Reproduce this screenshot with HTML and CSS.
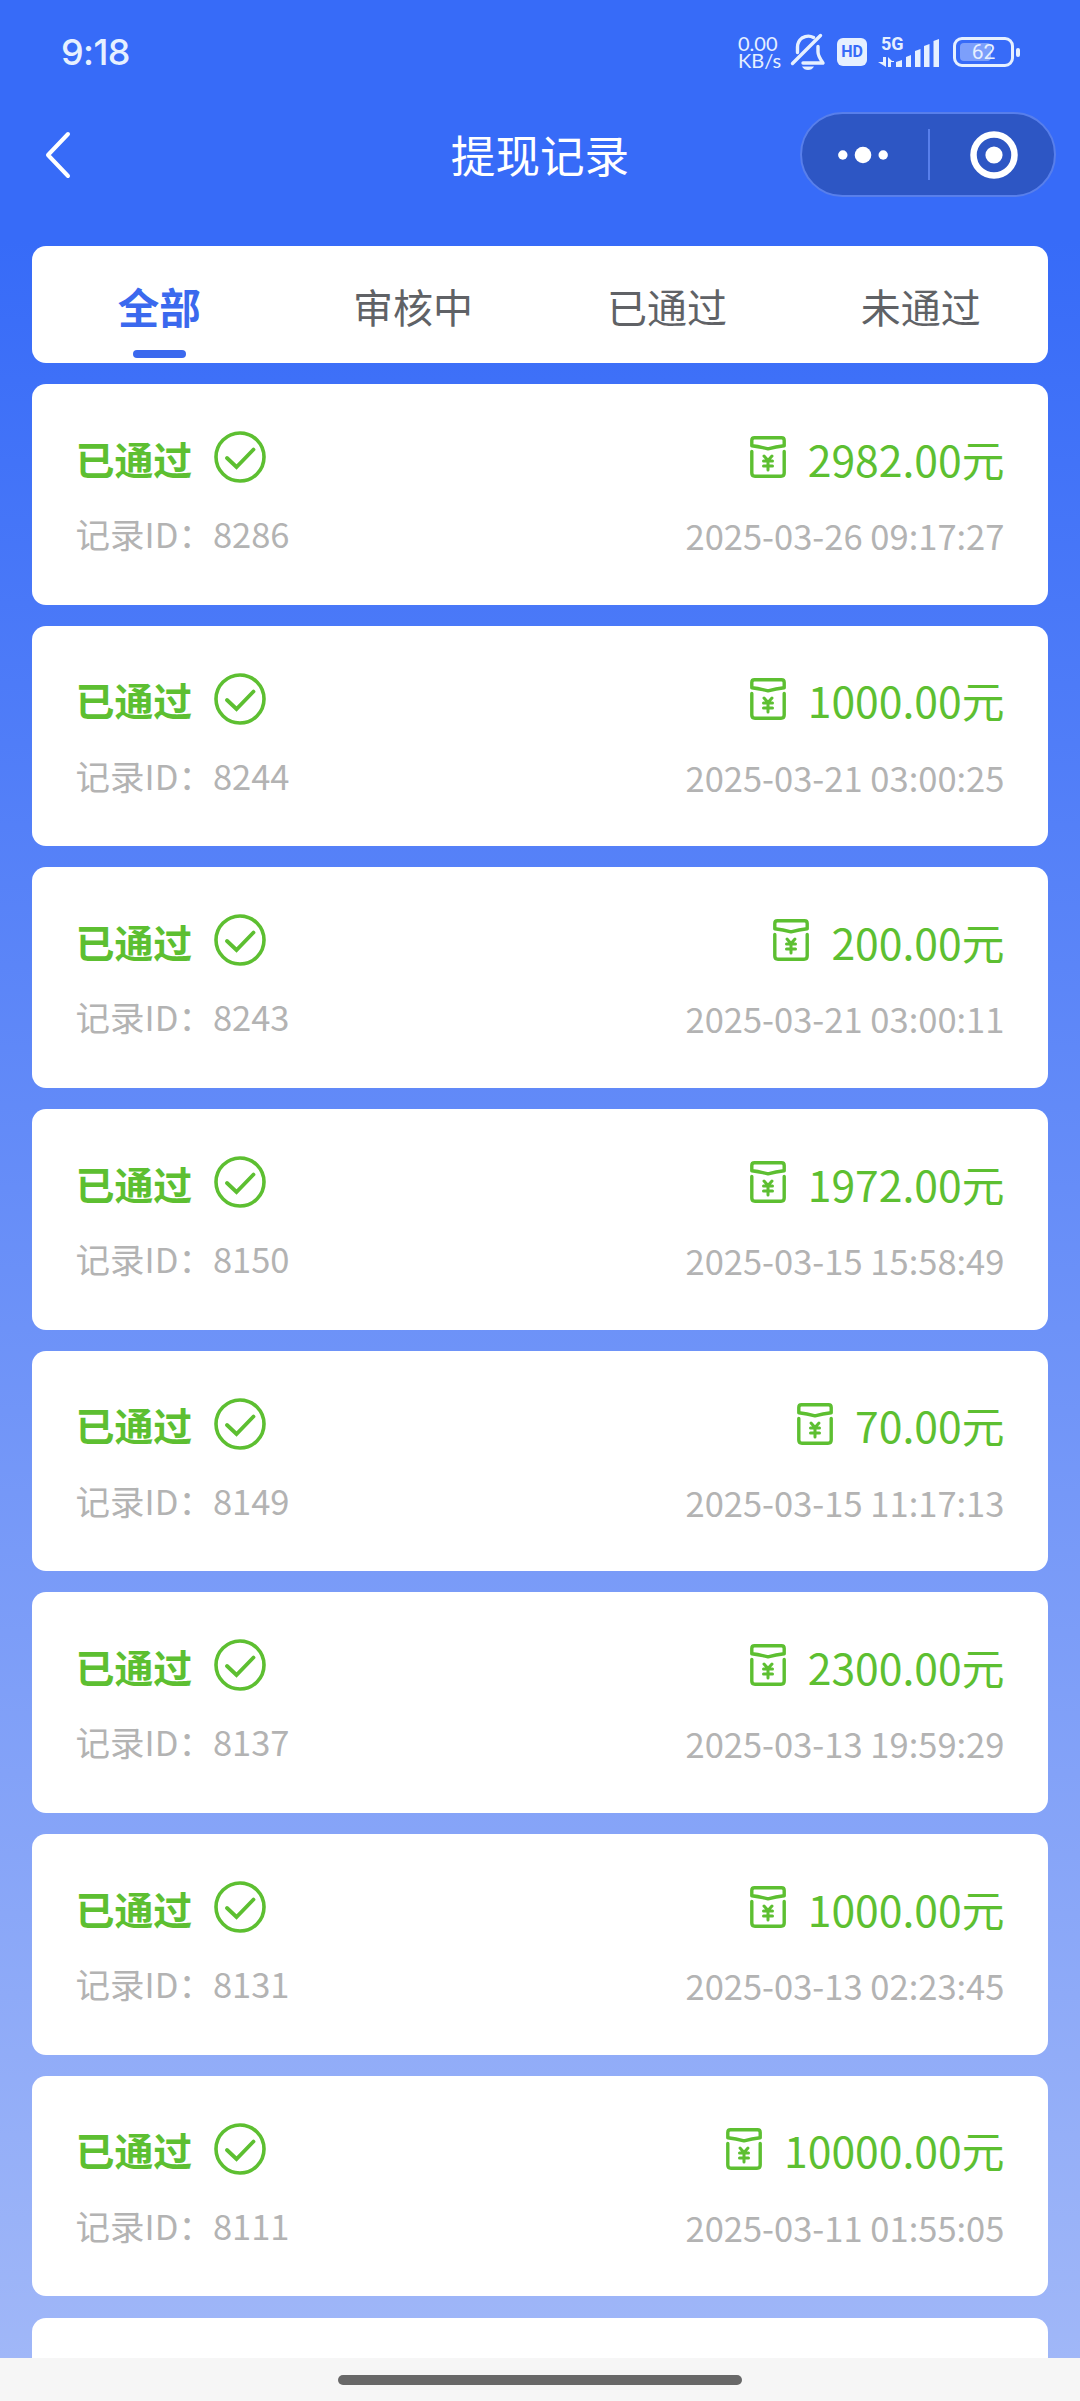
FILE: index.html
```html
<!DOCTYPE html>
<html lang="zh-CN">
<head>
<meta charset="utf-8">
<title>提现记录</title>
<link rel="stylesheet" href="styles.css">
</head>
<body>
<svg class="sprite" aria-hidden="true">
  <symbol id="check" viewBox="0 0 52 52">
    <circle cx="26" cy="26" r="24" fill="none" stroke="currentColor" stroke-width="3.6"/>
    <path d="M13 27 L22.5 36 L39.500 18.500" fill="none" stroke="currentColor" stroke-width="3.8" stroke-linecap="round" stroke-linejoin="miter"/>
  </symbol>
  <symbol id="packet" viewBox="0 0 36 42">
    <g fill="none" stroke="currentColor" stroke-width="3.400" stroke-linecap="round" stroke-linejoin="round">
      <path d="M4.500 1.800H31.500Q34.200 1.800 34.200 4.500V9.800Q26 10.800 18 12.800Q10 10.800 1.800 9.800V4.500Q1.800 1.800 4.500 1.800Z"/>
      <path d="M1.800 15.500V37Q1.800 40.200 5 40.200H31Q34.200 40.200 34.200 37V15.500"/>
      <path d="M14 20L18 24.500L22 20M13.500 25H22.500M13.500 30H22.500M18 25V34" stroke-width="3"/>
    </g>
  </symbol>
</svg>
<div class="screen">
  <div class="status">
    <span class="clock">9:18</span>
    <div class="speed"><span>0.00</span><span>KB/s</span></div>
    <svg class="bell" width="36" height="38" viewBox="0 0 36 38" fill="none" stroke="currentColor" stroke-width="3.400" stroke-linecap="round" stroke-linejoin="round">
      <path d="M28 13.500V19Q28 23 33 30H13"/>
      <path d="M23.500 4.500Q18 1.500 12 5Q7.500 8.500 7.500 14V19.500"/>
      <path d="M30.500 2.500L2.500 30.500"/>
      <path d="M12 33.500H24Q22 37 18 37T12 33.500Z" fill="currentColor" stroke="none"/>
    </svg>
    <span class="hd">HD</span>
    <svg class="signal" width="62" height="32" viewBox="0 0 62 32" fill="currentColor">
      <text x="3" y="14" class="net">5G</text>
      <path d="M5 21h3v10L0 26h5zM10 31V21l4 4h2v1h-3v5z"/>
      <path d="M18 31V26l6-2v7zM28 31V21l5-2v12zM37 31V15l5.500-2v18zM46 31V10l5.500-2v23zM55.500 31V5l5.500-2v28z"/>
    </svg>
    <div class="battery"><span class="battery-level"></span><b>62</b></div>
    <i class="battery-tip"></i>
  </div>
  <header class="nav">
    <svg class="back" width="28" height="50" viewBox="0 0 28 50" fill="none" stroke="currentColor" stroke-width="4" stroke-linecap="round" stroke-linejoin="round"><path d="M24 4L4 25L24 46"/></svg>
    <h1>提现记录</h1>
    <div class="capsule">
      <svg width="50" height="18" viewBox="0 0 50 18" fill="currentColor"><circle cx="4.800" cy="9" r="4.700"/><circle cx="25" cy="9" r="8.300"/><circle cx="45.200" cy="9" r="4.700"/></svg>
      <span class="divider"></span>
      <svg width="48" height="48" viewBox="0 0 48 48" fill="currentColor"><circle cx="24" cy="24" r="20.500" fill="none" stroke="currentColor" stroke-width="6.500"/><circle cx="24" cy="24" r="8.600"/></svg>
    </div>
  </header>
  <nav class="tabs">
    <a class="tab active">全部</a><a class="tab">审核中</a><a class="tab">已通过</a><a class="tab">未通过</a>
  </nav>
  <main class="list">
    <article class="card">
      <div class="info"><div class="state">已通过<svg class="check"><use href="#check"/></svg></div><p>记录ID：8286</p></div>
      <div class="info right"><div class="amount"><svg class="packet"><use href="#packet"/></svg>2982.00元</div><time>2025-03-26 09:17:27</time></div>
    </article>
    <article class="card">
      <div class="info"><div class="state">已通过<svg class="check"><use href="#check"/></svg></div><p>记录ID：8244</p></div>
      <div class="info right"><div class="amount"><svg class="packet"><use href="#packet"/></svg>1000.00元</div><time>2025-03-21 03:00:25</time></div>
    </article>
    <article class="card">
      <div class="info"><div class="state">已通过<svg class="check"><use href="#check"/></svg></div><p>记录ID：8243</p></div>
      <div class="info right"><div class="amount"><svg class="packet"><use href="#packet"/></svg>200.00元</div><time>2025-03-21 03:00:11</time></div>
    </article>
    <article class="card">
      <div class="info"><div class="state">已通过<svg class="check"><use href="#check"/></svg></div><p>记录ID：8150</p></div>
      <div class="info right"><div class="amount"><svg class="packet"><use href="#packet"/></svg>1972.00元</div><time>2025-03-15 15:58:49</time></div>
    </article>
    <article class="card">
      <div class="info"><div class="state">已通过<svg class="check"><use href="#check"/></svg></div><p>记录ID：8149</p></div>
      <div class="info right"><div class="amount"><svg class="packet"><use href="#packet"/></svg>70.00元</div><time>2025-03-15 11:17:13</time></div>
    </article>
    <article class="card">
      <div class="info"><div class="state">已通过<svg class="check"><use href="#check"/></svg></div><p>记录ID：8137</p></div>
      <div class="info right"><div class="amount"><svg class="packet"><use href="#packet"/></svg>2300.00元</div><time>2025-03-13 19:59:29</time></div>
    </article>
    <article class="card">
      <div class="info"><div class="state">已通过<svg class="check"><use href="#check"/></svg></div><p>记录ID：8131</p></div>
      <div class="info right"><div class="amount"><svg class="packet"><use href="#packet"/></svg>1000.00元</div><time>2025-03-13 02:23:45</time></div>
    </article>
    <article class="card">
      <div class="info"><div class="state">已通过<svg class="check"><use href="#check"/></svg></div><p>记录ID：8111</p></div>
      <div class="info right"><div class="amount"><svg class="packet"><use href="#packet"/></svg>10000.00元</div><time>2025-03-11 01:55:05</time></div>
    </article>
    <article class="card"></article>
  </main>
  <footer class="home"><span></span></footer>
</div>
</body>
</html>
```
FILE: styles.css
```css
* { box-sizing: border-box; }
body { margin: 0; font-family: "Noto Sans CJK SC", sans-serif; }
h1, p { margin: 0; font-weight: 400; }
svg { display: block; flex: none; }
.sprite { position: absolute; width: 0; height: 0; }

.screen {
  width: 1080px;
  height: 2401px;
  display: flex;
  flex-direction: column;
  overflow: hidden;
  background: linear-gradient(#376bf8 0, #376bf8 240px, #a0b7f8 2358px);
}

.status {
  height: 104px;
  flex: none;
  display: flex;
  align-items: center;
  padding: 0 60px 0 61px;
  color: #e6f0ff;
}
.clock { margin-right: auto; font: 500 36px/40px Inter, sans-serif; letter-spacing: -0.6px; }
.speed {
  display: flex;
  flex-direction: column;
  width: 41px;
  margin-right: 11px;
  font: 400 20px/17px Lato, sans-serif;
}
.bell { margin-right: 11px; }
.hd {
  width: 30px;
  height: 28px;
  margin-right: 11px;
  border-radius: 6px;
  background: #e6f0ff;
  color: #376bf8;
  font: 700 16px/28px Roboto, sans-serif;
  text-align: center;
}
.signal { margin-right: 13px; overflow: visible; }
.net { font: 700 18px Roboto, sans-serif; }
.battery {
  position: relative;
  width: 61px;
  height: 30px;
  border: 3px solid;
  border-radius: 9px;
  text-align: center;
}
.battery-level {
  position: absolute;
  left: 4px;
  top: 3px;
  width: 31px;
  height: 18px;
  border-radius: 4px;
  background: #7c9ffb;
}
.battery b { position: relative; font: 400 21px/25px Roboto, sans-serif; }
.battery-tip { width: 4px; height: 9px; margin-left: 2px; border-radius: 2px; background: currentColor; }

.nav {
  height: 142px;
  flex: none;
  display: grid;
  grid-template-columns: minmax(0, 1fr) auto minmax(0, 1fr);
  align-items: start;
  padding: 8px 24px 0;
  color: #fff;
}
.back { margin-top: 18px; margin-left: 20px; }
h1 { font-size: 44.6px; line-height: 84px; }
.capsule {
  justify-self: end;
  width: 256px;
  height: 85px;
  display: flex;
  align-items: center;
  justify-content: space-between;
  padding: 0 36px;
  border: 2px solid #587feb;
  border-radius: 43px;
  background: #2d56c4;
}
.divider { width: 2px; height: 51px; background: #587feb; }

.tabs {
  height: 117px;
  flex: none;
  display: flex;
  margin: 0 32.4px 21px;
  border-radius: 14px;
  background: #fff;
}
.tab {
  position: relative;
  flex: 1;
  font-size: 40px;
  line-height: 121px;
  text-align: center;
  color: #606266;
}
.tab.active { font-size: 41.500px; font-weight: 700; color: #3b69ee; }
.tab.active::after {
  content: "";
  position: absolute;
  left: 50%;
  bottom: 5px;
  width: 53px;
  height: 8px;
  margin-left: -26px;
  border-radius: 4px;
  background: #3b69ee;
}

.list {
  flex: 1;
  min-height: 0;
  overflow: hidden;
  display: flex;
  flex-direction: column;
  gap: 21.200px;
  padding: 0 32.400px;
}
.card {
  flex: none;
  height: 220.500px;
  display: flex;
  justify-content: space-between;
  padding: 43px 43.200px;
  border-radius: 14px;
  background: #fff;
}
.info { display: flex; flex-direction: column; }
.info.right { align-items: flex-end; }
.state, .amount { display: flex; align-items: center; height: 61px; color: #5dbf31; }
.state { font-size: 38.900px; font-weight: 700; }
.check { width: 52px; height: 52px; margin: -1px 0 0 22px; }
.amount { font-size: 42.700px; }
.packet { width: 36px; height: 42px; margin: -1px 22px 0 0; }
.info p, .info time { font-size: 34.500px; line-height: 50px; color: #b3b3b3; }
.info p { margin-top: 20px; }
.info time { margin-top: 22px; }

.home {
  height: 43px;
  flex: none;
  display: flex;
  justify-content: center;
  padding-top: 17px;
  background: #f6f6f6;
}
.home span { width: 404px; height: 10px; border-radius: 5px; background: #686868; }
```
